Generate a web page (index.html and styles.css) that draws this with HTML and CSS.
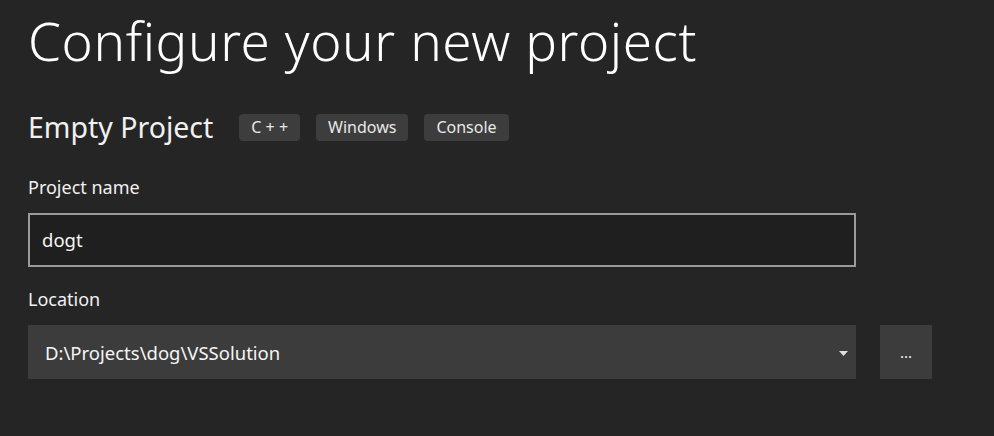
FILE: index.html
```html
<!DOCTYPE html>
<html>
<head>
<meta charset="utf-8">
<link rel="stylesheet" href="styles.css">
</head>
<body>
<div class="page">
  <h1 class="title">Configure your new project</h1>
  <div class="template-row">
    <span class="template-name">Empty Project</span>
    <div class="tags">
      <span class="tag">C + +</span>
      <span class="tag">Windows</span>
      <span class="tag">Console</span>
    </div>
  </div>
  <label class="field-label">Project name</label>
  <div class="text-input">dogt</div>
  <label class="field-label location-label">Location</label>
  <div class="location-row">
    <div class="select">
      <span class="select-value">D:\Projects\dog\VSSolution</span>
      <svg class="caret" width="9" height="5" viewBox="0 0 9 5"><path d="M0 0H9L4.5 5Z" fill="#e0e0e0"/></svg>
    </div>
    <div class="browse">...</div>
  </div>
</div>
</body>
</html>
```
FILE: styles.css
```css
html, body {
  margin: 0;
  padding: 0;
  background: #252525;
}
body {
  width: 994px;
  height: 436px;
  overflow: hidden;
  font-family: "Noto Sans", "Open Sans", sans-serif;
  color: #f5f5f5;
}
.page {
  padding: 8px 0 0 28px;
  display: flex;
  flex-direction: column;
  align-items: flex-start;
}
.title {
  margin: 0;
  font-size: 53px;
  font-weight: 300;
  line-height: 66px;
  color: #ffffff;
  letter-spacing: 0.6px;
}
.template-row {
  display: flex;
  align-items: center;
  gap: 26px;
  margin-top: 39px;
  height: 28px;
}
.template-name {
  font-size: 28.5px;
  font-weight: 400;
  color: #f1f1f1;
}
.tags {
  display: flex;
  gap: 16px;
}
.tag {
  background: #3d3d3d;
  border-radius: 4px;
  height: 27px;
  line-height: 27px;
  padding: 0 12px;
  font-size: 16px;
  color: #e8e8e8;
  white-space: pre;
}
.field-label {
  font-size: 18px;
  line-height: 24px;
  color: #f1f1f1;
  margin-top: 34px;
}
.text-input {
  box-sizing: border-box;
  margin-top: 14px;
  width: 828px;
  height: 54px;
  border: 2px solid #9a9a9a;
  background: #1f1f1f;
  padding: 0 12px;
  font-size: 18.5px;
  line-height: 50px;
  color: #f5f5f5;
}
.location-label {
  margin-top: 20px;
}
.location-row {
  display: flex;
  gap: 24px;
  margin-top: 14px;
}
.select {
  box-sizing: border-box;
  width: 828px;
  height: 54px;
  background: #3c3c3c;
  display: flex;
  align-items: center;
  justify-content: space-between;
  padding: 0 8px 0 17px;
}
.select-value {
  font-size: 18.5px;
  color: #f5f5f5;
}
.caret {
  margin-top: 2px;
}
.browse {
  width: 52px;
  height: 54px;
  background: #3c3c3c;
  display: flex;
  align-items: center;
  justify-content: center;
  font-size: 15px;
  color: #f1f1f1;
}
```
